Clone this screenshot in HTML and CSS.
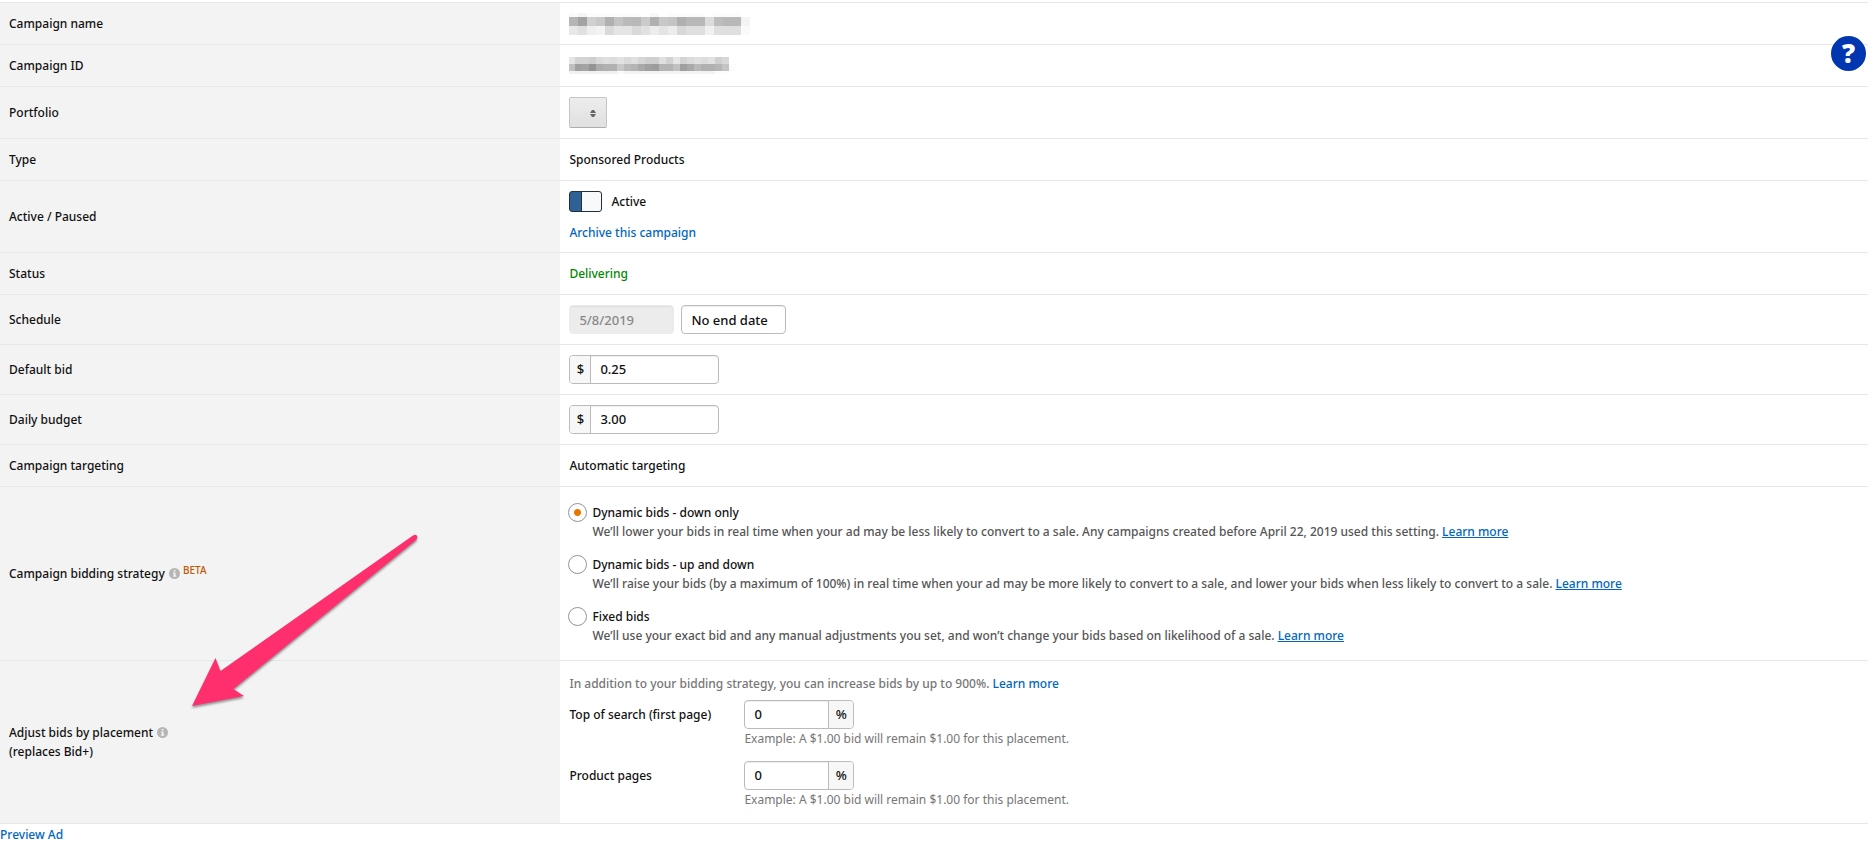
FILE: index.html
```
<!DOCTYPE html>
<html lang="en">

<head>
  <meta charset="utf-8">
  <title>Campaign settings</title>
  <link rel="stylesheet" href="styles.css">
</head>

<body>
  <table class="settings">
    <tbody>
      <tr>
        <th scope="row">Campaign name</th>
        <td>
          <svg class="redacted" width="182" height="22" viewBox="0 0 182 22" shape-rendering="crispEdges" aria-hidden="true">
            <rect width="9" height="4" fill="#fafafa"/><rect x="9" width="9" height="4" fill="#f5f5f5"/><rect x="18" width="54" height="4" fill="#fcfcfc"/><rect x="81" width="9" height="4" fill="#f8f8f8"/><rect x="99" width="36" height="4" fill="#fbfbfb"/><rect x="144" width="28" height="4" fill="#fcfcfc"/>
            <rect x="0" y="4" width="9" height="9" fill="#b5b5b5"/><rect x="9" y="4" width="9" height="9" fill="#a3a3a3"/><rect x="18" y="4" width="9" height="9" fill="#d0d0d0"/><rect x="27" y="4" width="9" height="9" fill="#c8c8c8"/><rect x="36" y="4" width="9" height="9" fill="#b0b0b0"/><rect x="45" y="4" width="9" height="9" fill="#c4c4c4"/><rect x="54" y="4" width="9" height="9" fill="#bababa"/><rect x="63" y="4" width="9" height="9" fill="#b8b8b8"/><rect x="72" y="4" width="9" height="9" fill="#cbcbcb"/><rect x="81" y="4" width="9" height="9" fill="#b0b0b0"/><rect x="90" y="4" width="9" height="9" fill="#c8c8c8"/><rect x="99" y="4" width="9" height="9" fill="#c4c4c4"/><rect x="108" y="4" width="9" height="9" fill="#b0b0b0"/><rect x="117" y="4" width="19" height="9" fill="#b8b8b8"/><rect x="136" y="4" width="9" height="9" fill="#dcdcdc"/><rect x="145" y="4" width="9" height="9" fill="#bdbdbd"/><rect x="154" y="4" width="18" height="9" fill="#b8b8b8"/><rect x="172" y="4" width="9" height="9" fill="#f4f4f4"/>
            <rect x="0" y="13" width="9" height="9" fill="#e8e8e8"/><rect x="9" y="13" width="9" height="9" fill="#e0e0e0"/><rect x="18" y="13" width="9" height="9" fill="#efefef"/><rect x="27" y="13" width="9" height="9" fill="#f4f4f4"/><rect x="36" y="13" width="9" height="9" fill="#dadada"/><rect x="45" y="13" width="18" height="9" fill="#e5e5e5"/><rect x="63" y="13" width="9" height="9" fill="#d9d9d9"/><rect x="72" y="13" width="9" height="9" fill="#e1e1e1"/><rect x="81" y="13" width="9" height="9" fill="#ececec"/><rect x="90" y="13" width="9" height="9" fill="#e4e4e4"/><rect x="99" y="13" width="9" height="9" fill="#ececec"/><rect x="108" y="13" width="9" height="9" fill="#d8d8d8"/><rect x="117" y="13" width="19" height="9" fill="#dfdfdf"/><rect x="136" y="13" width="9" height="9" fill="#f0f0f0"/><rect x="145" y="13" width="27" height="9" fill="#dfdfdf"/><rect x="172" y="13" width="9" height="9" fill="#fafafa"/>
          </svg>
        </td>
      </tr>
      <tr>
        <th scope="row">Campaign ID</th>
        <td>
          <svg class="redacted" width="168" height="17" viewBox="0 0 168 17" shape-rendering="crispEdges" aria-hidden="true">
            <rect x="0" y="0" width="6" height="7" fill="#e5e5e5"/><rect x="6" y="0" width="14" height="7" fill="#d4d4d4"/><rect x="20" y="0" width="7" height="7" fill="#cecece"/><rect x="27" y="0" width="7" height="7" fill="#dadada"/><rect x="34" y="0" width="7" height="7" fill="#e0e0e0"/><rect x="41" y="0" width="7" height="7" fill="#dcdcdc"/><rect x="48" y="0" width="7" height="7" fill="#e2e2e2"/><rect x="55" y="0" width="7" height="7" fill="#dadada"/><rect x="62" y="0" width="7" height="7" fill="#e0e0e0"/><rect x="69" y="0" width="7" height="7" fill="#d6d6d6"/><rect x="76" y="0" width="14" height="7" fill="#cfcfcf"/><rect x="90" y="0" width="7" height="7" fill="#e0e0e0"/><rect x="97" y="0" width="7" height="7" fill="#d2d2d2"/><rect x="104" y="0" width="7" height="7" fill="#e6e6e6"/><rect x="111" y="0" width="7" height="7" fill="#d4d4d4"/><rect x="118" y="0" width="7" height="7" fill="#dcdcdc"/><rect x="125" y="0" width="7" height="7" fill="#e1e1e1"/><rect x="132" y="0" width="7" height="7" fill="#dcdcdc"/><rect x="139" y="0" width="7" height="7" fill="#e2e2e2"/><rect x="146" y="0" width="7" height="7" fill="#d0d0d0"/><rect x="153" y="0" width="7" height="7" fill="#d8d8d8"/>
            <rect x="0" y="7" width="6" height="7" fill="#c0c0c0"/><rect x="6" y="7" width="7" height="7" fill="#a0a0a0"/><rect x="13" y="7" width="7" height="7" fill="#a4a4a4"/><rect x="20" y="7" width="7" height="7" fill="#949494"/><rect x="27" y="7" width="7" height="7" fill="#acacac"/><rect x="34" y="7" width="14" height="7" fill="#b1b1b1"/><rect x="48" y="7" width="7" height="7" fill="#c9c9c9"/><rect x="55" y="7" width="7" height="7" fill="#b9b9b9"/><rect x="62" y="7" width="7" height="7" fill="#b4b4b4"/><rect x="69" y="7" width="7" height="7" fill="#a9a9a9"/><rect x="76" y="7" width="7" height="7" fill="#a0a0a0"/><rect x="83" y="7" width="7" height="7" fill="#9c9c9c"/><rect x="90" y="7" width="14" height="7" fill="#b4b4b4"/><rect x="104" y="7" width="7" height="7" fill="#c1c1c1"/><rect x="111" y="7" width="7" height="7" fill="#a0a0a0"/><rect x="118" y="7" width="7" height="7" fill="#a9a9a9"/><rect x="125" y="7" width="7" height="7" fill="#b8b8b8"/><rect x="132" y="7" width="14" height="7" fill="#b1b1b1"/><rect x="146" y="7" width="7" height="7" fill="#b6b6b6"/><rect x="153" y="7" width="7" height="7" fill="#c4c4c4"/><rect x="160" y="7" width="7" height="7" fill="#fcfcfc"/>
            <rect y="14" width="48" height="3" fill="#f1f1f1"/><rect x="48" y="14" width="7" height="3" fill="#fafafa"/><rect x="55" y="14" width="91" height="3" fill="#f3f3f3"/><rect x="146" y="14" width="14" height="3" fill="#fcfcfc"/>
          </svg>
        </td>
      </tr>
      <tr>
        <th scope="row"><label for="portfolio">Portfolio</label></th>
        <td>
          <div class="dropdown">
            <select id="portfolio"><option value=""></option></select>
            <svg class="dropdown-arrows" width="6" height="7" viewBox="0 0 6 7" aria-hidden="true">
              <path d="M0 3 2 0h2l2 3zM0 4h6L4 7H2z" fill="#666"/>
            </svg>
          </div>
        </td>
      </tr>
      <tr>
        <th scope="row">Type</th>
        <td>Sponsored Products</td>
      </tr>
      <tr>
        <th scope="row">Active / Paused</th>
        <td>
          <div class="toggle-line">
            <input class="toggle" type="checkbox" id="active" checked>
            <label for="active">Active</label>
          </div>
          <a href="#">Archive this campaign</a>
        </td>
      </tr>
      <tr>
        <th scope="row">Status</th>
        <td class="delivering">Delivering</td>
      </tr>
      <tr>
        <th scope="row"><label for="start-date">Schedule</label></th>
        <td>
          <div class="dates">
            <input class="text-input" type="text" id="start-date" value="5/8/2019" disabled>
            <input class="text-input" type="text" value="No end date" aria-label="End date">
          </div>
        </td>
      </tr>
      <tr>
        <th scope="row"><label for="default-bid">Default bid</label></th>
        <td>
          <div class="input-group money">
            <span class="addon">$</span>
            <input type="text" id="default-bid" value="0.25">
          </div>
        </td>
      </tr>
      <tr>
        <th scope="row"><label for="daily-budget">Daily budget</label></th>
        <td>
          <div class="input-group money">
            <span class="addon">$</span>
            <input type="text" id="daily-budget" value="3.00">
          </div>
        </td>
      </tr>
      <tr>
        <th scope="row">Campaign targeting</th>
        <td>Automatic targeting</td>
      </tr>
      <tr>
        <th scope="row">
          Campaign bidding strategy
          <svg class="info" width="11" height="11" viewBox="0 0 11 11" aria-hidden="true">
            <circle cx="5.500" cy="5.500" r="5.500" fill="#b5b5b5"/>
            <path d="M4.700 2h1.800v1.500H4.700zM4 4.500h2.500v3H7.200v1.200H4V7.500h.8v-2H4z" fill="#f3f3f3"/>
          </svg>
          <span class="beta">BETA</span>
        </th>
        <td class="strategy-cell">
          <div class="strategies">
            <div class="strategy">
              <input type="radio" name="strategy" id="down-only" checked>
              <div>
                <label for="down-only">Dynamic bids - down only</label>
                <p>We’ll lower your bids in real time when your ad may be less likely to convert to a sale. Any campaigns created before April 22, 2019 used this setting. <a href="#">Learn more</a></p>
              </div>
            </div>
            <div class="strategy">
              <input type="radio" name="strategy" id="up-down">
              <div>
                <label for="up-down">Dynamic bids - up and down</label>
                <p>We’ll raise your bids (by a maximum of 100%) in real time when your ad may be more likely to convert to a sale, and lower your bids when less likely to convert to a sale. <a href="#">Learn more</a></p>
              </div>
            </div>
            <div class="strategy">
              <input type="radio" name="strategy" id="fixed">
              <div>
                <label for="fixed">Fixed bids</label>
                <p>We’ll use your exact bid and any manual adjustments you set, and won’t change your bids based on likelihood of a sale. <a href="#">Learn more</a></p>
              </div>
            </div>
          </div>
        </td>
      </tr>
      <tr>
        <th scope="row">
          Adjust bids by placement
          <svg class="info" width="11" height="11" viewBox="0 0 11 11" aria-hidden="true">
            <circle cx="5.500" cy="5.500" r="5.500" fill="#b5b5b5"/>
            <path d="M4.700 2h1.800v1.500H4.700zM4 4.500h2.500v3H7.200v1.200H4V7.500h.8v-2H4z" fill="#f3f3f3"/>
          </svg>
          <br>(replaces Bid+)
        </th>
        <td class="placement-cell">
          <p class="intro">In addition to your bidding strategy, you can increase bids by up to 900%. <a href="#">Learn more</a></p>
          <div class="placements">
            <label for="top-search">Top of search (first page)</label>
            <div>
              <div class="input-group percent">
                <input type="text" id="top-search" value="0">
                <span class="addon">%</span>
              </div>
              <p class="example">Example: A $1.00 bid will remain $1.00 for this placement.</p>
            </div>
            <label for="product-pages">Product pages</label>
            <div>
              <div class="input-group percent">
                <input type="text" id="product-pages" value="0">
                <span class="addon">%</span>
              </div>
              <p class="example">Example: A $1.00 bid will remain $1.00 for this placement.</p>
            </div>
          </div>
        </td>
      </tr>
    </tbody>
  </table>
  <a class="preview" href="#">Preview Ad</a>

  <button class="help" type="button" aria-label="Help">?</button>

  <svg class="arrow" width="240" height="184" viewBox="0 0 240 184" aria-hidden="true">
    <path d="M2 176 25.500 128l5 13L223 5.500q3-1.500 4 .5t-1 4L43.500 159 54 166z" fill="#ff2f6d"/>
  </svg>
</body>

</html>
```
FILE: styles.css
```
* {
  box-sizing: border-box;
}

body {
  margin: 0;
  padding: 2px 8px 0 0;
  background: #fff;
  color: #111;
  font-family: "Noto Sans", sans-serif;
  font-size: 12px;
  font-weight: 500;
  line-height: 19px;
}

p {
  margin: 0;
}

a {
  color: #0066c0;
  text-decoration: none;
}

input,
select,
button {
  margin: 0;
  font: inherit;
  color: inherit;
}

.settings {
  width: 100%;
  border-collapse: separate;
  border-spacing: 0;
  border-bottom: 1px solid #e7e7e7;
}

.settings th,
.settings td {
  height: 42px;
  padding: 10px 9px;
  border-top: 1px solid #e7e7e7;
  text-align: left;
  vertical-align: middle;
  font-weight: inherit;
}

.settings th {
  width: 30%;
  background: #f3f3f3;
}

.redacted {
  display: block;
  margin: -2px 0;
}

.settings .delivering {
  color: #008a00;
}

.dropdown {
  position: relative;
  width: 38px;
}

.dropdown select {
  display: block;
  width: 100%;
  height: 31px;
  appearance: none;
  border: 1px solid #c6c6c6;
  border-bottom-color: #adadad;
  border-radius: 2px;
  background: linear-gradient(#ededed, #e0e0e0);
}

.dropdown-arrows {
  position: absolute;
  top: 13px;
  right: 11px;
  pointer-events: none;
}

.toggle-line {
  display: flex;
  align-items: center;
  gap: 9px;
  margin-bottom: 11px;
}

.toggle {
  width: 33px;
  height: 21px;
  appearance: none;
  border: 1px solid #232f3e;
  border-radius: 3px;
  background: linear-gradient(90deg, #2e6296 11px, #232f3e 11px, #232f3e 12px, #f8f9fa 12px);
}

.dates {
  display: flex;
  gap: 7px;
}

.text-input,
.input-group {
  height: 29px;
  border: 1px solid #bbb;
  border-radius: 4px;
  background: #fff;
  box-shadow: inset 0 1px 1px #eee;
  font-size: 13px;
}

.text-input {
  width: 105px;
  padding: 0 9px;
}

.text-input:disabled {
  border-color: #ececec;
  background: #ececec;
  color: #888;
  box-shadow: inset 0 1px 1px #ddd;
}

.input-group {
  display: flex;
  overflow: hidden;
}

.input-group input {
  flex: 1;
  min-width: 0;
  padding: 0 9px;
  border: 0;
  background: none;
}

.addon {
  width: 21px;
  line-height: 27px;
  text-align: center;
  background: #f7f7f7;
}

.money {
  width: 150px;
}

.money .addon {
  border-right: 1px solid #bbb;
}

.percent {
  width: 110px;
}

.percent .addon {
  width: 25px;
  border-left: 1px solid #bbb;
}

.info {
  margin-left: 1px;
  vertical-align: -1px;
}

.beta {
  color: #c45500;
  font-size: 10px;
  line-height: 10px;
  vertical-align: 4px;
}

.settings .strategy-cell {
  padding: 16px 8px 15px;
}

.strategies {
  display: flex;
  flex-direction: column;
  gap: 14px;
}

.strategy {
  display: flex;
  gap: 5px;
}

.strategy p {
  color: #555;
}

.strategy a {
  text-decoration: underline;
}

.strategy input {
  flex: none;
  width: 19px;
  height: 19px;
  appearance: none;
  border: 1px solid #949494;
  border-radius: 50%;
}

.strategy input:checked {
  background: radial-gradient(circle, #e77600 3px, #fff 4px);
}

.settings .placement-cell {
  padding: 13px 9px 14px;
}

.intro {
  margin-bottom: 7px;
  color: #767676;
}

.placements {
  display: grid;
  grid-template-columns: 175px 1fr;
  row-gap: 13px;
}

.placements label {
  line-height: 29px;
}

.example {
  color: #767676;
  font-weight: 400;
}

.preview {
  display: inline-block;
  padding-top: 1px;
}

.help {
  position: absolute;
  top: 36px;
  right: 10px;
  width: 35px;
  height: 35px;
  padding: 0;
  border: 0;
  border-radius: 50%;
  background: #0037b0;
  color: #fff;
  font-family: "Open Sans", sans-serif;
  font-size: 26px;
  font-weight: 800;
  line-height: 35px;
  text-align: center;
}

.arrow {
  position: absolute;
  top: 530px;
  left: 190px;
  pointer-events: none;
  filter: drop-shadow(0 2px 1px rgba(0, 0, 0, 0.4));
}
```
